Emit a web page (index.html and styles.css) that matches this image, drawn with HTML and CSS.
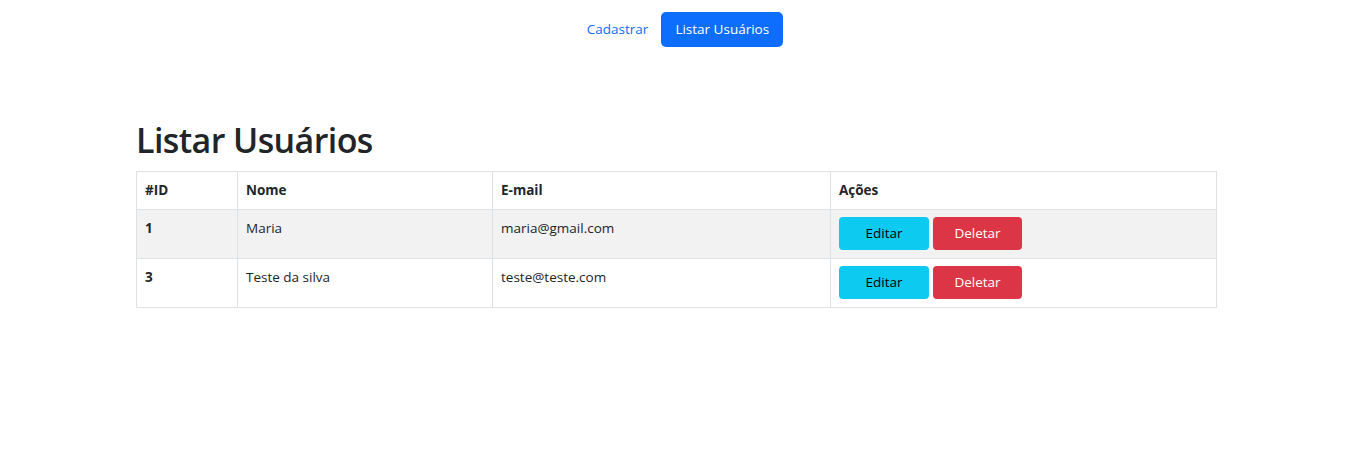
FILE: index.html
```html
<!DOCTYPE html>
<html lang="pt-BR">
<head>
<meta charset="utf-8">
<title>Listar Usuários</title>
<link rel="stylesheet" href="styles.css">
</head>
<body>
<nav class="nav">
  <a class="nav-link" href="#">Cadastrar</a>
  <a class="nav-link active" href="#">Listar Usuários</a>
</nav>
<main class="container">
  <h1 class="title">Listar Usuários</h1>
  <table class="table">
    <colgroup>
      <col class="c-id"><col class="c-nome"><col class="c-email"><col class="c-acoes">
    </colgroup>
    <thead>
      <tr><th>#ID</th><th>Nome</th><th>E-mail</th><th>Ações</th></tr>
    </thead>
    <tbody>
      <tr class="striped">
        <th>1</th><td>Maria</td><td>maria@gmail.com</td>
        <td class="actions"><button class="btn btn-info">Editar</button><button class="btn btn-danger">Deletar</button></td>
      </tr>
      <tr>
        <th>3</th><td>Teste da silva</td><td>teste@teste.com</td>
        <td class="actions"><button class="btn btn-info">Editar</button><button class="btn btn-danger">Deletar</button></td>
      </tr>
    </tbody>
  </table>
</main>
</body>
</html>
```
FILE: styles.css
```css
* { box-sizing: border-box; }
html, body { margin: 0; padding: 0; background: #fff; }
body {
  font-family: "Open Sans", "Noto Sans", "Liberation Sans", sans-serif;
  font-size: 13.5px;
  line-height: 21px;
  color: #212529;
}
.nav {
  display: flex;
  justify-content: center;
  padding-top: 12px;
  padding-right: 2px;
}
.nav-link {
  display: block;
  height: 35px;
  line-height: 35px;
  padding: 0 13px;
  color: #0d6efd;
  text-decoration: none;
  border-radius: 5px;
}
.nav-link.active {
  background: #0d6efd;
  color: #fff;
  padding: 0 14px;
}
.container {
  width: 1080px;
  margin-left: 136px;
  padding-top: 71px;
}
.title {
  margin: 0 0 8px 0;
  font-size: 34px;
  line-height: 45px;
  font-weight: 600;
  letter-spacing: -0.6px;
  color: #212529;
}
.table {
  width: 1080px;
  border-collapse: collapse;
  table-layout: fixed;
}
.c-id { width: 101px; }
.c-nome { width: 255px; }
.c-email { width: 338px; }
.c-acoes { width: 386px; }
.table th, .table td {
  border: 1px solid #dee2e6;
  padding: 8px 8px;
  text-align: left;
  vertical-align: top;
  font-weight: 400;
}
.table th { font-weight: 700; }
.table thead th { height: 37px; }
.table tbody th, .table tbody td { height: 49px; }
.striped th, .striped td { background: #f2f2f2; }
.table td.actions { padding: 7px 8px; }
.btn {
  font-family: inherit;
  font-size: 13.5px;
  height: 33px;
  line-height: 33px;
  padding: 0;
  border: 0;
  border-radius: 4px;
  margin-right: 4px;
  vertical-align: top;
}
.btn-info { background: #0dcaf0; color: #000; width: 90px; }
.btn-danger { background: #dc3545; color: #fff; width: 89px; }
```
